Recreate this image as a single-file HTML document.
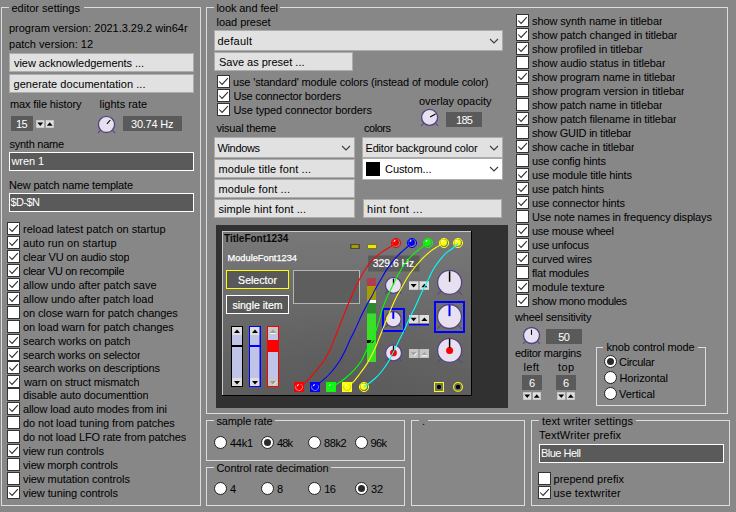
<!DOCTYPE html>
<html><head><meta charset="utf-8"><title>settings</title>
<style>
html,body{margin:0;padding:0}
body{width:736px;height:512px;background:#878787;position:relative;overflow:hidden;
 font-family:"Liberation Sans",sans-serif;font-size:11px;color:#000}
body>div,body>svg{position:absolute;box-sizing:content-box}
.t{line-height:13px;white-space:nowrap}
.g{border:1px solid #dcdcdc}
.lg{height:13px;background:#878787}
.cb{width:11px;height:11px;border:1px solid #333;background:#fff}
.cb svg{position:absolute;left:-1px;top:-1px}
.rb{width:11px;height:11px;border:1px solid #222;background:#fff;border-radius:50%}
.rb i{position:absolute;left:2px;top:2px;width:7px;height:7px;border-radius:50%;background:#2a2a2a}
.btn{border:1px solid #adadad;background:#e1e1e1}
.chev{position:absolute;right:3px;top:50%;margin-top:-3px}
.sw{position:absolute;left:3px;top:3px;width:14px;height:14px;background:#000}
.ed{border:1px solid #fff;background:#5a5a5a}
.dp{background:#5a5a5a}
</style></head>
<body>
<div class="g" style="left:1px;top:7px;width:198px;height:497px"></div>
<div class="lg" style="left:9px;top:2px;width:75px"></div>
<div class="t" style="left:11.5px;top:2px;letter-spacing:-0.002px;">editor settings</div>
<div class="t" style="left:9px;top:22px;letter-spacing:-0.018px;">program version: 2021.3.29.2 win64r</div>
<div class="t" style="left:9px;top:38px;letter-spacing:0.018px;">patch version: 12</div>
<div class="btn" style="left:9px;top:53px;height:17px;width:183px"></div>
<div class="t" style="left:14px;top:57.0px;letter-spacing:-0.061px;">view acknowledgements ...</div>
<div class="btn" style="left:9px;top:74px;height:17px;width:183px"></div>
<div class="t" style="left:13.5px;top:78.0px;letter-spacing:0.043px;">generate documentation ...</div>
<div class="t" style="left:10px;top:98px;letter-spacing:-0.125px;">max file history</div>
<div class="t" style="left:99.5px;top:98px;letter-spacing:-0.009px;">lights rate</div>
<div class="dp" style="left:11px;top:116px;width:22px;height:15px"></div>
<div class="t" style="left:16.06px;top:118.0px;letter-spacing:-0.750px;color:#fff;">15</div>
<svg style="position:absolute;left:36px;top:120px" width="18" height="8" viewBox="0 0 18 8"><rect x="0" y="0" width="8.5" height="8" fill="#b4b4b4"/><rect x="9.5" y="0" width="8.5" height="8" fill="#b4b4b4"/><rect x="0.5" y="0.5" width="7.5" height="7" fill="#dedede"/><rect x="10.0" y="0.5" width="7.5" height="7" fill="#dedede"/><polygon points="1.35,2.5 7.15,2.5 4.25,5.9" fill="#000"/><polygon points="10.85,5.7 16.65,5.7 13.75,2.3" fill="#000"/></svg>
<svg style="position:absolute;left:94px;top:112px" width="24" height="24" viewBox="0 0 24 24"><path d="M6.67 18.23 L3.91 20.99 M18.33 18.23 L21.09 20.99" stroke="#5a4a85" stroke-width="1.1" fill="none"/><circle cx="12.5" cy="12.400000000000006" r="8.1" fill="#e6e0f0" stroke="#54447f" stroke-width="1.35"/><line x1="12.93" y1="11.91" x2="16.33" y2="8.00" stroke="#000" stroke-width="1.1"/></svg>
<div class="dp" style="left:123px;top:116px;width:59px;height:15px"></div>
<div class="t" style="left:131px;top:118.0px;letter-spacing:-0.223px;color:#fff;">30.74 Hz</div>
<div class="t" style="left:9.5px;top:138px;letter-spacing:-0.253px;">synth name</div>
<div class="ed" style="left:9px;top:152px;width:183px;height:17px"></div>
<div class="t" style="left:11.5px;top:155.0px;letter-spacing:-0.081px;color:#fff;">wren 1</div>
<div class="t" style="left:9px;top:179px;letter-spacing:-0.170px;">New patch name template</div>
<div class="ed" style="left:9px;top:193px;width:183px;height:17px"></div>
<div class="t" style="left:10.5px;top:196.0px;letter-spacing:-0.586px;color:#fff;">$D-$N</div>
<div class="cb" style="left:7px;top:222px"><svg width="13" height="13" viewBox="0 0 13 13"><polyline points="2.2,6.5 5.1,9.4 10.9,3.1" fill="none" stroke="#2a2a2a" stroke-width="1.05"/></svg></div>
<div class="t" style="left:23px;top:222.5px;letter-spacing:0.022px;height:13px;overflow:hidden;">reload latest patch on startup</div>
<div class="cb" style="left:7px;top:236px"><svg width="13" height="13" viewBox="0 0 13 13"><polyline points="2.2,6.5 5.1,9.4 10.9,3.1" fill="none" stroke="#2a2a2a" stroke-width="1.05"/></svg></div>
<div class="t" style="left:23px;top:236.5px;letter-spacing:0.066px;height:13px;overflow:hidden;">auto run on startup</div>
<div class="cb" style="left:7px;top:250px"><svg width="13" height="13" viewBox="0 0 13 13"><polyline points="2.2,6.5 5.1,9.4 10.9,3.1" fill="none" stroke="#2a2a2a" stroke-width="1.05"/></svg></div>
<div class="t" style="left:23px;top:250.5px;letter-spacing:-0.226px;height:13px;overflow:hidden;">clear VU on audio stop</div>
<div class="cb" style="left:7px;top:264px"><svg width="13" height="13" viewBox="0 0 13 13"><polyline points="2.2,6.5 5.1,9.4 10.9,3.1" fill="none" stroke="#2a2a2a" stroke-width="1.05"/></svg></div>
<div class="t" style="left:23px;top:264.5px;letter-spacing:-0.331px;height:13px;overflow:hidden;">clear VU on recompile</div>
<div class="cb" style="left:7px;top:278px"><svg width="13" height="13" viewBox="0 0 13 13"><polyline points="2.2,6.5 5.1,9.4 10.9,3.1" fill="none" stroke="#2a2a2a" stroke-width="1.05"/></svg></div>
<div class="t" style="left:23px;top:278.5px;letter-spacing:-0.016px;height:13px;overflow:hidden;">allow undo after patch save</div>
<div class="cb" style="left:7px;top:292px"><svg width="13" height="13" viewBox="0 0 13 13"><polyline points="2.2,6.5 5.1,9.4 10.9,3.1" fill="none" stroke="#2a2a2a" stroke-width="1.05"/></svg></div>
<div class="t" style="left:23px;top:292.5px;letter-spacing:-0.037px;height:13px;overflow:hidden;">allow undo after patch load</div>
<div class="cb" style="left:7px;top:306px"></div>
<div class="t" style="left:23px;top:306.5px;letter-spacing:-0.117px;height:13px;overflow:hidden;">on close warn for patch changes</div>
<div class="cb" style="left:7px;top:320px"></div>
<div class="t" style="left:23px;top:320.5px;letter-spacing:-0.091px;height:13px;overflow:hidden;">on load warn for patch changes</div>
<div class="cb" style="left:7px;top:334px"><svg width="13" height="13" viewBox="0 0 13 13"><polyline points="2.2,6.5 5.1,9.4 10.9,3.1" fill="none" stroke="#2a2a2a" stroke-width="1.05"/></svg></div>
<div class="t" style="left:23px;top:334.5px;letter-spacing:-0.125px;height:13px;overflow:hidden;">search works on patch</div>
<div class="cb" style="left:7px;top:348px"><svg width="13" height="13" viewBox="0 0 13 13"><polyline points="2.2,6.5 5.1,9.4 10.9,3.1" fill="none" stroke="#2a2a2a" stroke-width="1.05"/></svg></div>
<div class="t" style="left:23px;top:348.5px;letter-spacing:-0.177px;height:13px;overflow:hidden;">search works on selector</div>
<div class="cb" style="left:7px;top:361px"><svg width="13" height="13" viewBox="0 0 13 13"><polyline points="2.2,6.5 5.1,9.4 10.9,3.1" fill="none" stroke="#2a2a2a" stroke-width="1.05"/></svg></div>
<div class="t" style="left:23px;top:361.5px;letter-spacing:-0.182px;height:13px;overflow:hidden;">search works on descriptions</div>
<div class="cb" style="left:7px;top:375px"><svg width="13" height="13" viewBox="0 0 13 13"><polyline points="2.2,6.5 5.1,9.4 10.9,3.1" fill="none" stroke="#2a2a2a" stroke-width="1.05"/></svg></div>
<div class="t" style="left:24px;top:375.5px;letter-spacing:-0.165px;height:13px;overflow:hidden;">warn on struct mismatch</div>
<div class="cb" style="left:7px;top:388px"></div>
<div class="t" style="left:23px;top:388.5px;letter-spacing:-0.121px;height:13px;overflow:hidden;">disable auto documenttion</div>
<div class="cb" style="left:7px;top:402px"><svg width="13" height="13" viewBox="0 0 13 13"><polyline points="2.2,6.5 5.1,9.4 10.9,3.1" fill="none" stroke="#2a2a2a" stroke-width="1.05"/></svg></div>
<div class="t" style="left:23px;top:402.5px;letter-spacing:-0.163px;height:13px;overflow:hidden;">allow load auto modes from ini</div>
<div class="cb" style="left:7px;top:416px"></div>
<div class="t" style="left:23px;top:416.5px;letter-spacing:-0.075px;height:13px;overflow:hidden;">do not load tuning from patches</div>
<div class="cb" style="left:7px;top:430px"></div>
<div class="t" style="left:23px;top:430.5px;letter-spacing:-0.131px;height:13px;overflow:hidden;">do not load LFO rate from patches</div>
<div class="cb" style="left:7px;top:444px"><svg width="13" height="13" viewBox="0 0 13 13"><polyline points="2.2,6.5 5.1,9.4 10.9,3.1" fill="none" stroke="#2a2a2a" stroke-width="1.05"/></svg></div>
<div class="t" style="left:23px;top:444.5px;letter-spacing:-0.098px;height:13px;overflow:hidden;">view run controls</div>
<div class="cb" style="left:7px;top:458px"></div>
<div class="t" style="left:23px;top:458.5px;letter-spacing:-0.158px;height:13px;overflow:hidden;">view morph controls</div>
<div class="cb" style="left:7px;top:472px"></div>
<div class="t" style="left:23px;top:472.5px;letter-spacing:-0.089px;height:13px;overflow:hidden;">view mutation controls</div>
<div class="cb" style="left:7px;top:486px"><svg width="13" height="13" viewBox="0 0 13 13"><polyline points="2.2,6.5 5.1,9.4 10.9,3.1" fill="none" stroke="#2a2a2a" stroke-width="1.05"/></svg></div>
<div class="t" style="left:23px;top:486.5px;letter-spacing:-0.087px;height:13px;overflow:hidden;">view tuning controls</div>
<div class="g" style="left:206px;top:7px;width:520px;height:405px"></div>
<div class="lg" style="left:214px;top:2px;width:66px"></div>
<div class="t" style="left:216.5px;top:2px;letter-spacing:-0.083px;">look and feel</div>
<div class="t" style="left:216.5px;top:16px;letter-spacing:-0.041px;">load preset</div>
<div class="btn" style="left:214px;top:30px;width:287px;height:19px;background:#e1e1e1"><svg class="chev" width="10" height="6" viewBox="0 0 10 6"><polyline points="1,1 5,5 9,1" fill="none" stroke="#3c3c3c" stroke-width="1.1"/></svg></div>
<div class="t" style="left:217.5px;top:34.5px;letter-spacing:0.250px;">default</div>
<div class="btn" style="left:214px;top:52px;height:17px;width:137px"></div>
<div class="t" style="left:219px;top:55.5px;letter-spacing:-0.007px;">Save as preset ...</div>
<div class="cb" style="left:217px;top:75px"><svg width="13" height="13" viewBox="0 0 13 13"><polyline points="2.2,6.5 5.1,9.4 10.9,3.1" fill="none" stroke="#2a2a2a" stroke-width="1.05"/></svg></div>
<div class="t" style="left:233px;top:75.5px;letter-spacing:-0.150px;">use 'standard' module colors (instead of module color)</div>
<div class="cb" style="left:217px;top:89px"><svg width="13" height="13" viewBox="0 0 13 13"><polyline points="2.2,6.5 5.1,9.4 10.9,3.1" fill="none" stroke="#2a2a2a" stroke-width="1.05"/></svg></div>
<div class="t" style="left:233.5px;top:89.5px;letter-spacing:-0.192px;">Use connector borders</div>
<div class="cb" style="left:217px;top:103px"><svg width="13" height="13" viewBox="0 0 13 13"><polyline points="2.2,6.5 5.1,9.4 10.9,3.1" fill="none" stroke="#2a2a2a" stroke-width="1.05"/></svg></div>
<div class="t" style="left:233.5px;top:103.5px;letter-spacing:-0.109px;">Use typed connector borders</div>
<div class="t" style="left:419px;top:94.5px;letter-spacing:-0.065px;">overlay opacity</div>
<svg style="position:absolute;left:417px;top:105px" width="24" height="24" viewBox="0 0 24 24"><path d="M6.84 18.16 L4.12 20.88 M18.36 18.16 L21.08 20.88" stroke="#5a4a85" stroke-width="1.1" fill="none"/><circle cx="12.600000000000023" cy="12.400000000000006" r="8" fill="#e6e0f0" stroke="#54447f" stroke-width="1.35"/><line x1="13.15" y1="12.08" x2="18.56" y2="8.96" stroke="#000" stroke-width="1.1"/></svg>
<div class="dp" style="left:446px;top:112px;width:36px;height:15px"></div>
<div class="t" style="left:456.12px;top:114.0px;letter-spacing:-0.750px;color:#fff;">185</div>
<div class="t" style="left:216.5px;top:122px;letter-spacing:-0.196px;">visual theme</div>
<div class="t" style="left:364px;top:122px;letter-spacing:-0.469px;">colors</div>
<div class="btn" style="left:214px;top:137px;width:139px;height:19px;background:#e1e1e1"><svg class="chev" width="10" height="6" viewBox="0 0 10 6"><polyline points="1,1 5,5 9,1" fill="none" stroke="#3c3c3c" stroke-width="1.1"/></svg></div>
<div class="t" style="left:217.5px;top:141.5px;letter-spacing:-0.354px;">Windows</div>
<div class="btn" style="left:362px;top:137px;width:139px;height:19px;background:#e1e1e1"><svg class="chev" width="10" height="6" viewBox="0 0 10 6"><polyline points="1,1 5,5 9,1" fill="none" stroke="#3c3c3c" stroke-width="1.1"/></svg></div>
<div class="t" style="left:365.5px;top:141.5px;letter-spacing:-0.186px;">Editor background color</div>
<div class="btn" style="left:214px;top:159px;height:17px;width:139px"></div>
<div class="t" style="left:218.5px;top:162.5px;letter-spacing:0.130px;">module title font ...</div>
<div class="btn" style="left:362px;top:158px;width:139px;height:20px;background:#fff"><b class="sw"></b><svg class="chev" width="10" height="6" viewBox="0 0 10 6"><polyline points="1,1 5,5 9,1" fill="none" stroke="#3c3c3c" stroke-width="1.1"/></svg></div>
<div class="t" style="left:385px;top:163.0px;letter-spacing:-0.066px;">Custom...</div>
<div class="btn" style="left:214px;top:179px;height:17px;width:139px"></div>
<div class="t" style="left:218.5px;top:182.5px;letter-spacing:0.127px;">module font ...</div>
<div class="btn" style="left:214px;top:199px;height:17px;width:139px"></div>
<div class="t" style="left:218.5px;top:202.5px;letter-spacing:0.067px;">simple hint font ...</div>
<div class="btn" style="left:363px;top:199px;height:17px;width:137px"></div>
<div class="t" style="left:367px;top:202.5px;letter-spacing:0.344px;">hint font ...</div>
<div class="cb" style="left:516px;top:14px"><svg width="13" height="13" viewBox="0 0 13 13"><polyline points="2.2,6.5 5.1,9.4 10.9,3.1" fill="none" stroke="#2a2a2a" stroke-width="1.05"/></svg></div>
<div class="t" style="left:532px;top:14.5px;letter-spacing:-0.105px;height:13px;overflow:hidden;">show synth name in titlebar</div>
<div class="cb" style="left:516px;top:28px"><svg width="13" height="13" viewBox="0 0 13 13"><polyline points="2.2,6.5 5.1,9.4 10.9,3.1" fill="none" stroke="#2a2a2a" stroke-width="1.05"/></svg></div>
<div class="t" style="left:532px;top:28.5px;letter-spacing:-0.106px;height:13px;overflow:hidden;">show patch changed in titlebar</div>
<div class="cb" style="left:516px;top:42px"><svg width="13" height="13" viewBox="0 0 13 13"><polyline points="2.2,6.5 5.1,9.4 10.9,3.1" fill="none" stroke="#2a2a2a" stroke-width="1.05"/></svg></div>
<div class="t" style="left:532px;top:42.5px;letter-spacing:-0.079px;height:13px;overflow:hidden;">show profiled in titlebar</div>
<div class="cb" style="left:516px;top:56px"></div>
<div class="t" style="left:532px;top:56.5px;letter-spacing:-0.078px;height:13px;overflow:hidden;">show audio status in titlebar</div>
<div class="cb" style="left:516px;top:70px"><svg width="13" height="13" viewBox="0 0 13 13"><polyline points="2.2,6.5 5.1,9.4 10.9,3.1" fill="none" stroke="#2a2a2a" stroke-width="1.05"/></svg></div>
<div class="t" style="left:532px;top:70.5px;letter-spacing:-0.156px;height:13px;overflow:hidden;">show program name in titlebar</div>
<div class="cb" style="left:516px;top:84px"></div>
<div class="t" style="left:532px;top:84.5px;letter-spacing:-0.107px;height:13px;overflow:hidden;">show program version in titlebar</div>
<div class="cb" style="left:516px;top:98px"></div>
<div class="t" style="left:532px;top:98.5px;letter-spacing:-0.129px;height:13px;overflow:hidden;">show patch name in titlebar</div>
<div class="cb" style="left:516px;top:112px"><svg width="13" height="13" viewBox="0 0 13 13"><polyline points="2.2,6.5 5.1,9.4 10.9,3.1" fill="none" stroke="#2a2a2a" stroke-width="1.05"/></svg></div>
<div class="t" style="left:532px;top:112.5px;letter-spacing:-0.114px;height:13px;overflow:hidden;">show patch filename in titlebar</div>
<div class="cb" style="left:516px;top:126px"></div>
<div class="t" style="left:532px;top:126.5px;letter-spacing:-0.216px;height:13px;overflow:hidden;">show GUID in titlebar</div>
<div class="cb" style="left:516px;top:140px"><svg width="13" height="13" viewBox="0 0 13 13"><polyline points="2.2,6.5 5.1,9.4 10.9,3.1" fill="none" stroke="#2a2a2a" stroke-width="1.05"/></svg></div>
<div class="t" style="left:532px;top:140.5px;letter-spacing:-0.152px;height:13px;overflow:hidden;">show cache in titlebar</div>
<div class="cb" style="left:516px;top:154px"></div>
<div class="t" style="left:532px;top:154.5px;letter-spacing:-0.167px;height:13px;overflow:hidden;">use config hints</div>
<div class="cb" style="left:516px;top:168px"><svg width="13" height="13" viewBox="0 0 13 13"><polyline points="2.2,6.5 5.1,9.4 10.9,3.1" fill="none" stroke="#2a2a2a" stroke-width="1.05"/></svg></div>
<div class="t" style="left:532px;top:168.5px;letter-spacing:-0.162px;height:13px;overflow:hidden;">use module title hints</div>
<div class="cb" style="left:516px;top:182px"><svg width="13" height="13" viewBox="0 0 13 13"><polyline points="2.2,6.5 5.1,9.4 10.9,3.1" fill="none" stroke="#2a2a2a" stroke-width="1.05"/></svg></div>
<div class="t" style="left:532px;top:182.5px;letter-spacing:-0.147px;height:13px;overflow:hidden;">use patch hints</div>
<div class="cb" style="left:516px;top:196px"><svg width="13" height="13" viewBox="0 0 13 13"><polyline points="2.2,6.5 5.1,9.4 10.9,3.1" fill="none" stroke="#2a2a2a" stroke-width="1.05"/></svg></div>
<div class="t" style="left:532px;top:196.5px;letter-spacing:-0.137px;height:13px;overflow:hidden;">use connector hints</div>
<div class="cb" style="left:516px;top:210px"></div>
<div class="t" style="left:532px;top:210.5px;letter-spacing:-0.171px;height:13px;overflow:hidden;">Use note names in frequency displays</div>
<div class="cb" style="left:516px;top:224px"><svg width="13" height="13" viewBox="0 0 13 13"><polyline points="2.2,6.5 5.1,9.4 10.9,3.1" fill="none" stroke="#2a2a2a" stroke-width="1.05"/></svg></div>
<div class="t" style="left:532px;top:224.5px;letter-spacing:-0.266px;height:13px;overflow:hidden;">use mouse wheel</div>
<div class="cb" style="left:516px;top:238px"><svg width="13" height="13" viewBox="0 0 13 13"><polyline points="2.2,6.5 5.1,9.4 10.9,3.1" fill="none" stroke="#2a2a2a" stroke-width="1.05"/></svg></div>
<div class="t" style="left:532px;top:238.5px;letter-spacing:-0.237px;height:13px;overflow:hidden;">use unfocus</div>
<div class="cb" style="left:516px;top:252px"><svg width="13" height="13" viewBox="0 0 13 13"><polyline points="2.2,6.5 5.1,9.4 10.9,3.1" fill="none" stroke="#2a2a2a" stroke-width="1.05"/></svg></div>
<div class="t" style="left:532px;top:252.5px;letter-spacing:-0.159px;height:13px;overflow:hidden;">curved wires</div>
<div class="cb" style="left:516px;top:266px"></div>
<div class="t" style="left:532px;top:266.5px;letter-spacing:-0.213px;height:13px;overflow:hidden;">flat modules</div>
<div class="cb" style="left:516px;top:280px"><svg width="13" height="13" viewBox="0 0 13 13"><polyline points="2.2,6.5 5.1,9.4 10.9,3.1" fill="none" stroke="#2a2a2a" stroke-width="1.05"/></svg></div>
<div class="t" style="left:532px;top:280.5px;letter-spacing:-0.014px;height:13px;overflow:hidden;">module texture</div>
<div class="cb" style="left:516px;top:294px"><svg width="13" height="13" viewBox="0 0 13 13"><polyline points="2.2,6.5 5.1,9.4 10.9,3.1" fill="none" stroke="#2a2a2a" stroke-width="1.05"/></svg></div>
<div class="t" style="left:532px;top:294.5px;letter-spacing:-0.371px;height:13px;overflow:hidden;">show mono modules</div>
<div class="t" style="left:515px;top:311px;letter-spacing:-0.188px;">wheel sensitivity</div>
<svg style="position:absolute;left:519px;top:323px" width="24" height="24" viewBox="0 0 24 24"><path d="M6.74 18.26 L4.02 20.98 M18.26 18.26 L20.98 20.98" stroke="#5a4a85" stroke-width="1.1" fill="none"/><circle cx="12.5" cy="12.5" r="8" fill="#e6e0f0" stroke="#54447f" stroke-width="1.35"/><line x1="12.50" y1="11.86" x2="12.50" y2="6.74" stroke="#000" stroke-width="1.1"/></svg>
<div class="dp" style="left:546px;top:329px;width:36px;height:15px"></div>
<div class="t" style="left:558.31px;top:331.0px;letter-spacing:-0.750px;color:#fff;">50</div>
<div class="t" style="left:515px;top:347px;letter-spacing:-0.248px;">editor margins</div>
<div class="t" style="left:523.5px;top:361px;letter-spacing:0.292px;">left</div>
<div class="t" style="left:558px;top:361px;letter-spacing:0.406px;">top</div>
<div class="dp" style="left:522px;top:375px;width:20px;height:15px"></div>
<div class="t" style="left:529px;top:377.0px;letter-spacing:0.000px;color:#fff;">6</div>
<div class="dp" style="left:556px;top:375px;width:20px;height:15px"></div>
<div class="t" style="left:563px;top:377.0px;letter-spacing:0.000px;color:#fff;">6</div>
<svg style="position:absolute;left:523px;top:392px" width="18" height="8" viewBox="0 0 18 8"><rect x="0" y="0" width="8.5" height="8" fill="#b4b4b4"/><rect x="9.5" y="0" width="8.5" height="8" fill="#b4b4b4"/><rect x="0.5" y="0.5" width="7.5" height="7" fill="#dedede"/><rect x="10.0" y="0.5" width="7.5" height="7" fill="#dedede"/><polygon points="1.35,2.5 7.15,2.5 4.25,5.9" fill="#000"/><polygon points="10.85,5.7 16.65,5.7 13.75,2.3" fill="#000"/></svg>
<svg style="position:absolute;left:557px;top:392px" width="18" height="8" viewBox="0 0 18 8"><rect x="0" y="0" width="8.5" height="8" fill="#b4b4b4"/><rect x="9.5" y="0" width="8.5" height="8" fill="#b4b4b4"/><rect x="0.5" y="0.5" width="7.5" height="7" fill="#dedede"/><rect x="10.0" y="0.5" width="7.5" height="7" fill="#dedede"/><polygon points="1.35,2.5 7.15,2.5 4.25,5.9" fill="#000"/><polygon points="10.85,5.7 16.65,5.7 13.75,2.3" fill="#000"/></svg>
<div class="g" style="left:596px;top:347px;width:108px;height:57px"></div>
<div class="lg" style="left:603px;top:341px;width:95px"></div>
<div class="t" style="left:606.5px;top:341px;letter-spacing:-0.152px;">knob control mode</div>
<div class="rb" style="left:604.0px;top:355.0px"><i></i></div>
<div class="t" style="left:619px;top:355.5px;letter-spacing:-0.317px;">Circular</div>
<div class="rb" style="left:604.0px;top:371.0px"></div>
<div class="t" style="left:619.5px;top:371.5px;letter-spacing:-0.122px;">Horizontal</div>
<div class="rb" style="left:604.0px;top:387.0px"></div>
<div class="t" style="left:619px;top:387.5px;letter-spacing:-0.020px;">Vertical</div>
<svg style="position:absolute;left:216px;top:225px" width="292" height="183" viewBox="216 225 292 183" font-family="Liberation Sans, sans-serif">
<defs><linearGradient id="mg" x1="0" y1="0" x2="0" y2="1"><stop offset="0" stop-color="#787878"/><stop offset="0.45" stop-color="#6c6c6c"/><stop offset="1" stop-color="#5f5f5f"/></linearGradient><radialGradient id="mr" cx="0.45" cy="0.8" r="0.6"><stop offset="0" stop-color="#000" stop-opacity="0.07"/><stop offset="1" stop-color="#000" stop-opacity="0"/></radialGradient></defs>
<rect x="216" y="225" width="292" height="183" fill="#313131"/>
<rect x="222" y="231" width="250" height="165" fill="url(#mg)"/>
<rect x="222" y="231" width="250" height="165" fill="url(#mr)"/>
<rect x="222" y="231" width="250" height="1" fill="#c8c8c8"/>
<rect x="222" y="231" width="1" height="165" fill="#c8c8c8"/>
<rect x="471" y="231" width="1" height="165" fill="#000"/>
<rect x="222" y="395" width="250" height="1" fill="#000"/>
<text x="224" y="242.4" font-size="10" font-weight="bold" fill="#0a0a0a">TitleFont1234</text>
<text x="227.5" y="261" font-size="9.7" fill="#fff" stroke="#fff" stroke-width="0.25" textLength="69.5" lengthAdjust="spacingAndGlyphs">ModuleFont1234</text>
<rect x="226.5" y="270.5" width="62" height="18" fill="#585858" stroke="#ffff00" stroke-width="1"/>
<text x="257.5" y="284" font-size="10.6" fill="#fff" stroke="#fff" stroke-width="0.2" text-anchor="middle">Selector</text>
<rect x="226.5" y="295.5" width="62" height="18" fill="#585858" stroke="#ffffff" stroke-width="1"/>
<text x="257.5" y="309" font-size="10.5" fill="#fff" stroke="#fff" stroke-width="0.2" text-anchor="middle">single item</text>
<rect x="293.5" y="270.5" width="66" height="33" fill="#5e5e5e" stroke="#b4b4b4" stroke-width="1"/>
<rect x="350" y="244" width="10" height="5" fill="#4a4a3a"/><rect x="351.5" y="245" width="7" height="3" fill="#a89c00"/>
<rect x="367" y="244" width="10" height="5" fill="#77772e"/><rect x="368" y="245" width="8" height="3" fill="#e8e810"/>
<rect x="368" y="255.5" width="51.5" height="16" fill="#5b5b5b"/>
<text x="393.5" y="267" font-size="11" fill="#fff" stroke="#fff" stroke-width="0.2" text-anchor="middle" textLength="41.5" lengthAdjust="spacingAndGlyphs">329.6 Hz</text>
<rect x="367" y="278" width="9" height="8" fill="#b03c50"/>
<rect x="367" y="286" width="9" height="14" fill="#a89c00"/>
<rect x="367" y="300" width="9" height="3" fill="#8a8a30"/><rect x="369.5" y="300" width="6.5" height="3" fill="#ffffff"/>
<rect x="367" y="303" width="9" height="10.5" fill="#2e8a2e"/>
<rect x="367" y="313.5" width="9" height="48.5" fill="#38e028"/>
<rect x="367" y="340" width="4.5" height="3" fill="#000"/><path d="M371 342 L372 343 L374 340.5" stroke="#000" stroke-width="0.9" fill="none"/>
<rect x="231.5" y="326.5" width="11" height="60" fill="#c0c4e6" stroke="#000" stroke-width="1"/>
<rect x="232" y="327" width="10" height="8" fill="#dedede"/>
<rect x="232" y="378" width="10" height="8" fill="#dedede"/>
<polygon points="234,333 240,333 237,329.6" fill="#000"/>
<polygon points="234,381 240,381 237,384.4" fill="#000"/>
<rect x="232" y="345" width="10" height="2" fill="#000"/>
<rect x="249.5" y="326.5" width="11" height="60" fill="#c0c4e6" stroke="#0000ff" stroke-width="1"/>
<rect x="250" y="327" width="10" height="8" fill="#dedede"/>
<rect x="250" y="378" width="10" height="8" fill="#dedede"/>
<polygon points="252,333 258,333 255,329.6" fill="#000"/>
<polygon points="252,381 258,381 255,384.4" fill="#000"/>
<rect x="250" y="345" width="10" height="2" fill="#0000ff"/><rect x="259.5" y="327" width="1" height="59" fill="#0000ff"/>
<rect x="267.5" y="326.5" width="11" height="60" fill="#c0c4e6" stroke="#ff0000" stroke-width="1"/>
<rect x="268" y="327" width="10" height="8" fill="#c8c8c8"/>
<rect x="268" y="378" width="10" height="8" fill="#c8c8c8"/>
<polygon points="270,333 276,333 273,329.6" fill="#9a9a9a"/>
<polygon points="270,381 276,381 273,384.4" fill="#9a9a9a"/>
<rect x="270.5" y="333" width="5" height="1" fill="#fff"/>
<path d="M273.5 385 L276.5 381.6" stroke="#fff" stroke-width="0.9"/>
<rect x="268" y="340" width="10" height="12" fill="#ff0000"/>
<path d="M387.74 291.16 L385.18 293.72 M399.26 291.16 L401.82 293.72" stroke="#5a4a85" stroke-width="1.15" fill="none"/>
<circle cx="393.5" cy="285.4" r="8" fill="#e6e0f0" stroke="#54447f" stroke-width="1.3"/>
<line x1="393.5" y1="284.60" x2="393.5" y2="278.60" stroke="#000" stroke-width="1.3"/>
<rect x="409" y="281.3" width="9.2" height="8.5" fill="#dedede"/><rect x="419.8" y="281.3" width="9.2" height="8.5" fill="#dedede"/>
<rect x="418.2" y="281.3" width="1.6" height="8.5" fill="#b0b0b0"/>
<polygon points="410.6,284.05 416.6,284.05 413.6,287.55" fill="#000"/>
<polygon points="421.4,287.35 427.4,287.35 424.4,283.85" fill="#000"/>
<path d="M440.96 291.04 L437.12 294.88 M458.24 291.04 L462.08 294.88" stroke="#5a4a85" stroke-width="1.15" fill="none"/>
<circle cx="449.6" cy="282.4" r="12" fill="#e6e0f0" stroke="#54447f" stroke-width="1.3"/>
<line x1="449.6" y1="281.80" x2="449.6" y2="271.24" stroke="#000" stroke-width="1.5"/>
<rect x="383" y="309" width="21" height="22" fill="#707070" stroke="#0000ff" stroke-width="2"/>
<path d="M387.68 324.82 L385.19 327.31 M398.92 324.82 L401.41 327.31" stroke="#5a4a85" stroke-width="1.15" fill="none"/>
<circle cx="393.3" cy="319.2" r="7.8" fill="#e6e0f0" stroke="#54447f" stroke-width="1.3"/>
<line x1="393.3" y1="318.81" x2="393.3" y2="311.79" stroke="#0000ff" stroke-width="2"/>
<rect x="409" y="315" width="9.2" height="8.3" fill="#dedede"/><rect x="419.8" y="315" width="9.2" height="8.3" fill="#dedede"/>
<rect x="418.2" y="315" width="1.6" height="8.3" fill="#b0b0b0"/>
<polygon points="410.6,317.65 416.6,317.65 413.6,321.15" fill="#000"/>
<polygon points="421.4,320.95 427.4,320.95 424.4,317.45" fill="#000"/>
<rect x="409" y="324" width="20" height="1.4" fill="#0000ff"/>
<rect x="435" y="302" width="29" height="30" fill="#707070" stroke="#0000ff" stroke-width="2"/>
<path d="M440.86 325.14 L437.02 328.98 M458.14 325.14 L461.98 328.98" stroke="#5a4a85" stroke-width="1.15" fill="none"/>
<circle cx="449.5" cy="316.5" r="12" fill="#e6e0f0" stroke="#54447f" stroke-width="1.3"/>
<line x1="449.5" y1="316.14" x2="449.5" y2="304.86" stroke="#0000ff" stroke-width="2"/>
<path d="M387.74 358.66 L385.18 361.22 M399.26 358.66 L401.82 361.22" stroke="#5a4a85" stroke-width="1.15" fill="none"/>
<circle cx="393.5" cy="352.9" r="8" fill="#e6e0f0" stroke="#54447f" stroke-width="1.3"/>
<circle cx="393.5" cy="352.9" r="3.4" fill="#ff0000"/>
<line x1="393.5" y1="351.30" x2="393.5" y2="345.70" stroke="#000" stroke-width="1.3"/>
<rect x="409" y="349" width="9.2" height="9" fill="#c6c6c6"/><rect x="419.8" y="349" width="9.2" height="9" fill="#c6c6c6"/>
<rect x="418.2" y="349" width="1.6" height="9" fill="#b0b0b0"/>
<polygon points="410.6,352.0 416.6,352.0 413.6,355.5" fill="#a6a6a6"/>
<polygon points="421.4,355.3 427.4,355.3 424.4,351.8" fill="#a6a6a6"/>
<path d="M414.1 356.0 L416.90000000000003 352.7" stroke="#fff" stroke-width="0.9"/>
<rect x="421.79999999999995" y="355.3" width="5.6" height="1" fill="#fff"/>
<path d="M440.96 359.04 L437.12 362.88 M458.24 359.04 L462.08 362.88" stroke="#5a4a85" stroke-width="1.15" fill="none"/>
<circle cx="449.6" cy="350.4" r="12" fill="#e6e0f0" stroke="#54447f" stroke-width="1.3"/>
<circle cx="449.6" cy="350.4" r="3.5" fill="#ff0000"/>
<line x1="449.6" y1="348.00" x2="449.6" y2="338.76" stroke="#000" stroke-width="1.5"/>
<rect x="294" y="382" width="10" height="10" fill="#ff0000"/>
<circle cx="299" cy="387" r="3.4" fill="none" stroke="#d08a8a" stroke-width="0.9" stroke-dasharray="15 6.4" transform="rotate(-60 299 387)"/>
<path d="M297.2 385.8 L298.6 384.4" stroke="#fff" stroke-width="1.1"/>
<rect x="310" y="382" width="10" height="10" fill="#0000ff"/>
<circle cx="315" cy="387" r="3.4" fill="none" stroke="#7a7ad0" stroke-width="0.9" stroke-dasharray="15 6.4" transform="rotate(-60 315 387)"/>
<path d="M313.2 385.8 L314.6 384.4" stroke="#fff" stroke-width="1.1"/>
<rect x="326" y="382" width="10" height="10" fill="#00ff00"/>
<circle cx="331" cy="387" r="3.4" fill="none" stroke="#6ac86a" stroke-width="0.9" stroke-dasharray="15 6.4" transform="rotate(-60 331 387)"/>
<path d="M329.2 385.8 L330.6 384.4" stroke="#fff" stroke-width="1.1"/>
<rect x="342" y="382" width="10" height="10" fill="#ffff00"/>
<circle cx="347" cy="387" r="3.4" fill="none" stroke="#c8c86a" stroke-width="0.9" stroke-dasharray="15 6.4" transform="rotate(-60 347 387)"/>
<path d="M345.2 385.8 L346.6 384.4" stroke="#fff" stroke-width="1.1"/>
<circle cx="364" cy="387" r="4.6" fill="#8a8a70" fill-opacity="0.55" stroke="#ffff00" stroke-width="1"/>
<circle cx="363.6" cy="386.6" r="3.3" fill="#ffff00"/>
<path d="M361.8 385.6 L363.2 384.2" stroke="#fff" stroke-width="1.1"/>
<circle cx="396" cy="243" r="4.6" fill="#8a8a70" fill-opacity="0.55" stroke="#ff0000" stroke-width="1"/>
<circle cx="395.6" cy="242.6" r="3.3" fill="#ff0000"/>
<path d="M393.8 241.6 L395.2 240.2" stroke="#fff" stroke-width="1.1"/>
<circle cx="412" cy="243" r="4.6" fill="#8a8a70" fill-opacity="0.55" stroke="#0000ff" stroke-width="1"/>
<circle cx="411.6" cy="242.6" r="3.3" fill="#0000ff"/>
<path d="M409.8 241.6 L411.2 240.2" stroke="#fff" stroke-width="1.1"/>
<circle cx="428" cy="243" r="4.6" fill="#8a8a70" fill-opacity="0.55" stroke="#00ff00" stroke-width="1"/>
<circle cx="427.6" cy="242.6" r="3.3" fill="#00ff00"/>
<path d="M425.8 241.6 L427.2 240.2" stroke="#fff" stroke-width="1.1"/>
<circle cx="444" cy="243" r="4.6" fill="#8a8a70" fill-opacity="0.55" stroke="#ffff00" stroke-width="1"/>
<circle cx="443.6" cy="242.6" r="3.3" fill="#ffff00"/>
<path d="M441.8 241.6 L443.2 240.2" stroke="#fff" stroke-width="1.1"/>
<circle cx="458" cy="243" r="4.6" fill="#8a8a70" fill-opacity="0.55" stroke="#ffff00" stroke-width="1"/>
<circle cx="457.6" cy="242.6" r="3.3" fill="#ffff00"/>
<path d="M455.8 241.6 L457.2 240.2" stroke="#fff" stroke-width="1.1"/>
<rect x="434.5" y="382.5" width="9" height="9" fill="#727272" stroke="#ffff00" stroke-width="1"/><circle cx="439" cy="386.9" r="2.2" fill="#000"/>
<circle cx="458" cy="386.9" r="4.4" fill="#6c6c6c" stroke="#ffff00" stroke-width="1.1"/><circle cx="458" cy="386.9" r="2.2" fill="#000"/>
<path d="M396.0 243.0C395.0 243.7 392.2 245.6 390.0 247.0C387.8 248.4 384.8 250.0 382.5 251.6C380.2 253.2 378.3 254.7 376.2 256.6C374.2 258.5 371.9 260.7 370.0 262.9C368.1 265.1 366.7 267.1 365.0 269.8C363.3 272.4 361.6 275.6 360.0 278.5C358.4 281.4 357.0 284.2 355.6 287.2C354.2 290.2 352.9 293.4 351.5 296.5C350.1 299.6 349.0 302.3 347.5 306.0C346.0 309.7 344.2 314.3 342.5 318.5C340.8 322.7 339.2 326.8 337.5 331.0C335.8 335.2 333.8 340.4 332.5 343.5C331.2 346.6 331.5 346.8 330.0 349.8C328.5 352.7 326.2 357.2 323.8 361.0C321.2 364.8 318.1 368.6 315.0 372.2C311.9 375.9 307.7 380.4 305.0 382.9C302.3 385.4 300.0 386.3 299.0 387.0" fill="none" stroke="#ff0000" stroke-width="1.1"/>
<path d="M412.0 243.0C411.0 243.8 408.2 246.2 406.2 247.9C404.2 249.7 402.3 251.2 400.0 253.5C397.7 255.8 394.8 258.8 392.5 261.6C390.2 264.4 388.3 267.2 386.2 270.4C384.2 273.6 381.9 277.8 380.0 281.0C378.1 284.2 376.4 287.2 375.0 289.8C373.6 292.2 373.4 293.3 371.9 296.0C370.4 298.7 368.0 302.7 366.2 306.0C364.5 309.3 363.1 312.0 361.2 316.0C359.4 320.0 356.9 325.8 355.0 329.8C353.1 333.7 351.7 336.2 350.0 339.8C348.3 343.3 346.9 347.2 345.0 351.0C343.1 354.8 341.2 358.5 338.8 362.2C336.2 366.0 333.0 370.2 330.0 373.5C327.0 376.8 323.1 380.0 320.6 382.2C318.1 384.5 315.9 386.2 315.0 387.0" fill="none" stroke="#0000ff" stroke-width="1.1"/>
<path d="M428.0 243.0C426.9 243.8 423.8 245.9 421.2 247.9C418.7 249.9 415.2 252.2 412.5 254.8C409.8 257.4 407.3 260.4 405.0 263.5C402.7 266.6 400.8 269.8 398.8 273.5C396.7 277.2 394.5 281.9 392.5 286.0C390.5 290.1 388.4 294.2 386.7 298.0C385.0 301.8 384.0 303.8 382.5 308.5C381.0 313.2 379.2 320.8 377.5 326.0C375.8 331.2 374.4 335.6 372.5 339.8C370.6 343.9 368.1 347.5 366.2 351.0C364.4 354.5 363.3 357.8 361.2 361.0C359.2 364.2 356.5 367.5 353.8 370.4C351.0 373.3 347.8 376.2 345.0 378.5C342.2 380.8 339.2 382.6 336.9 384.0C334.6 385.4 332.0 386.5 331.0 387.0" fill="none" stroke="#00ff00" stroke-width="1.1"/>
<path d="M444.0 243.0C442.9 243.6 439.8 245.2 437.5 246.6C435.2 248.0 432.7 249.4 430.0 251.6C427.3 253.8 424.0 256.9 421.2 259.8C418.5 262.6 416.0 265.6 413.8 268.5C411.5 271.4 409.6 273.9 407.5 277.2C405.4 280.6 403.0 285.4 401.2 288.5C399.5 291.6 398.6 292.7 396.9 296.0C395.2 299.3 393.2 303.9 391.2 308.5C389.3 313.1 386.9 318.9 385.0 323.5C383.1 328.1 381.7 331.8 380.0 336.0C378.3 340.2 377.1 344.0 375.0 348.5C372.9 353.0 370.0 358.7 367.5 362.9C365.0 367.1 362.4 370.3 360.0 373.5C357.6 376.7 355.3 380.0 353.1 382.2C350.9 384.5 348.0 386.2 347.0 387.0" fill="none" stroke="#ffff00" stroke-width="1.1"/>
<path d="M458.0 243.5C457.1 244.3 454.5 246.9 452.5 248.5C450.5 250.1 448.3 251.0 446.2 252.9C444.2 254.8 442.1 257.1 440.0 259.8C437.9 262.4 435.6 265.4 433.8 268.5C431.9 271.6 430.4 275.2 428.8 278.5C427.1 281.8 425.2 285.6 423.8 288.5C422.3 291.4 421.5 292.9 420.0 296.0C418.5 299.1 416.7 303.7 415.0 307.2C413.3 310.8 411.7 313.7 410.0 317.2C408.3 320.8 406.7 325.0 405.0 328.5C403.3 332.0 401.7 335.2 400.0 338.5C398.3 341.8 396.8 344.9 395.0 348.5C393.2 352.1 391.6 356.2 389.4 360.0C387.2 363.8 384.4 367.9 382.0 371.0C379.6 374.1 378.0 375.8 375.0 378.5C372.0 381.2 365.8 385.8 364.0 387.2" fill="none" stroke="#00ffff" stroke-width="1.1"/>
</svg>
<div class="g" style="left:206px;top:420px;width:197px;height:39px"></div>
<div class="lg" style="left:214px;top:415px;width:61px"></div>
<div class="t" style="left:216.5px;top:415px;letter-spacing:-0.138px;">sample rate</div>
<div class="rb" style="left:213.5px;top:436.0px"></div>
<div class="t" style="left:230px;top:436.5px;letter-spacing:-0.250px;">44k1</div>
<div class="rb" style="left:261.0px;top:436.0px"><i></i></div>
<div class="t" style="left:276.88px;top:436.5px;letter-spacing:-0.750px;">48k</div>
<div class="rb" style="left:307.5px;top:436.0px"></div>
<div class="t" style="left:324px;top:436.5px;letter-spacing:-0.417px;">88k2</div>
<div class="rb" style="left:354.5px;top:436.0px"></div>
<div class="t" style="left:370.5px;top:436.5px;letter-spacing:-0.625px;">96k</div>
<div class="g" style="left:206px;top:467px;width:197px;height:37px"></div>
<div class="lg" style="left:214px;top:462px;width:117px"></div>
<div class="t" style="left:216.5px;top:462px;letter-spacing:-0.075px;">Control rate decimation</div>
<div class="rb" style="left:213.5px;top:482.0px"></div>
<div class="t" style="left:230px;top:482.5px;letter-spacing:0.000px;">4</div>
<div class="rb" style="left:261.0px;top:482.0px"></div>
<div class="t" style="left:277px;top:482.5px;letter-spacing:0.000px;">8</div>
<div class="rb" style="left:307.5px;top:482.0px"></div>
<div class="t" style="left:324.31px;top:482.5px;letter-spacing:-0.750px;">16</div>
<div class="rb" style="left:354.5px;top:482.0px"><i></i></div>
<div class="t" style="left:371px;top:482.5px;letter-spacing:-0.125px;">32</div>
<div class="g" style="left:411px;top:420px;width:112px;height:84px"></div>
<div class="lg" style="left:419px;top:415px;width:9px"></div>
<div class="t" style="left:422px;top:415px;">.</div>
<div class="g" style="left:531px;top:420px;width:197px;height:84px"></div>
<div class="lg" style="left:539px;top:415px;width:97px"></div>
<div class="t" style="left:542px;top:415px;letter-spacing:0.122px;">text writer settings</div>
<div class="t" style="left:539px;top:429px;letter-spacing:0.171px;">TextWriter prefix</div>
<div class="ed" style="left:539px;top:444px;width:183px;height:17px"></div>
<div class="t" style="left:541px;top:447.0px;letter-spacing:-0.512px;color:#fff;">Blue Hell</div>
<div class="cb" style="left:538px;top:472px"></div>
<div class="t" style="left:553.5px;top:472.5px;letter-spacing:0.010px;">prepend prefix</div>
<div class="cb" style="left:538px;top:486px"><svg width="13" height="13" viewBox="0 0 13 13"><polyline points="2.2,6.5 5.1,9.4 10.9,3.1" fill="none" stroke="#2a2a2a" stroke-width="1.05"/></svg></div>
<div class="t" style="left:553.5px;top:486.5px;letter-spacing:0.132px;">use textwriter</div>
</body></html>
